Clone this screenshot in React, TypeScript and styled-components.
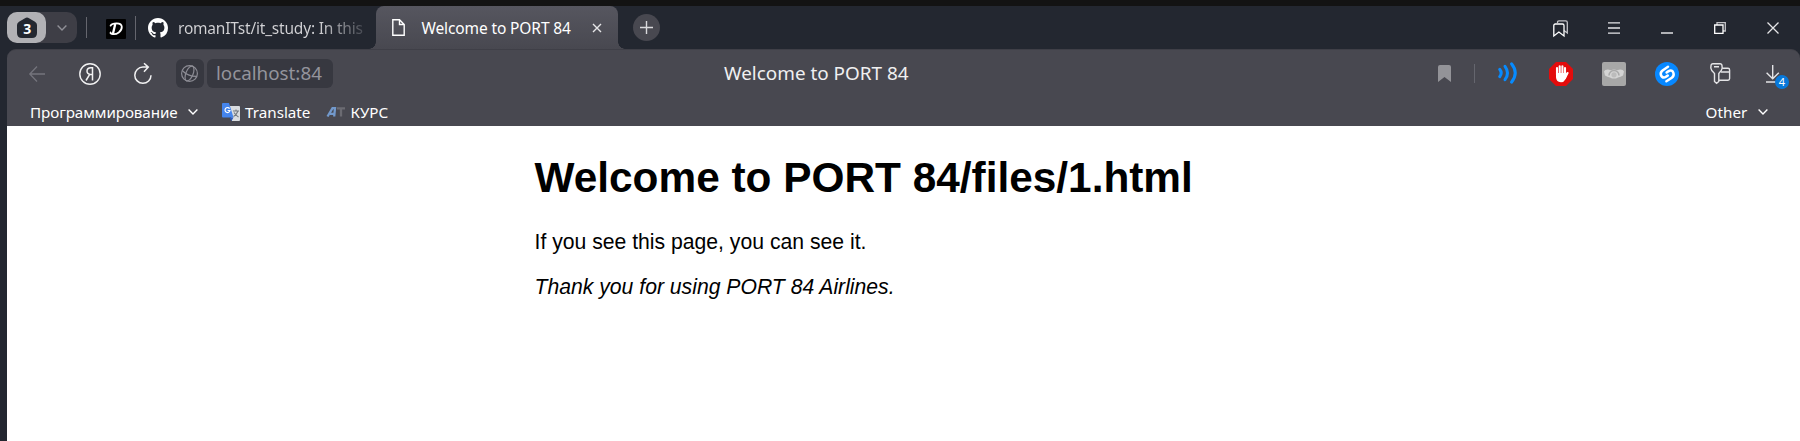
import React from "react";
import styled, { createGlobalStyle } from "styled-components";

const GlobalStyle = createGlobalStyle`
  * { box-sizing: border-box; }
  body { margin: 0; background: #232730; overflow: hidden; }
`;

const uiFont = `"Noto Sans", "Open Sans", sans-serif`;

const Window = styled.div`
  width: 1800px;
  height: 441px;
  display: flex;
  flex-direction: column;
  background: #232730;
  border-top: 6px solid #131313;
  padding-left: 7px;
  overflow: hidden;
  font-family: ${uiFont};
  color: #fff;
`;

const TabStrip = styled.header`
  height: 43px;
  flex: none;
  display: flex;
  align-items: center;
`;

const TabGroup = styled.div`
  display: flex;
  width: 70px;
  height: 31px;
  border-radius: 10px;
  background: #3e3e46;
`;

const GroupBadge = styled.div`
  width: 39px;
  border-radius: 10px;
  background: #b1b1b5;
  display: flex;
  align-items: center;
  justify-content: center;
`;

const GroupToggle = styled.div`
  flex: 1;
  display: flex;
  align-items: center;
  justify-content: center;
  padding-left: 1px;
`;

const Divider = styled.i<{ $h: number; $ml: number }>`
  width: 1px;
  height: ${(p) => p.$h}px;
  margin-left: ${(p) => p.$ml}px;
  background: #65666e;
  flex: none;
`;

const Icon = styled.svg<{ $ml?: number; $mr?: number; $dy?: number }>`
  display: block;
  flex: none;
  overflow: visible;
  margin-left: ${(p) => p.$ml ?? 0}px;
  margin-right: ${(p) => p.$mr ?? 0}px;
  margin-top: ${(p) => (p.$dy ?? 0) * 2}px;
`;

const Label = styled.span<{
  $size: number;
  $ml?: number;
  $ls?: number;
  $color?: string;
}>`
  font-size: ${(p) => p.$size}px;
  line-height: 24px;
  margin-left: ${(p) => p.$ml ?? 0}px;
  letter-spacing: ${(p) => p.$ls ?? 0}px;
  color: ${(p) => p.$color ?? "#fff"};
  white-space: nowrap;
  flex: none;
`;

const AddressLabel = styled(Label)`
  padding-bottom: 2px;
`;

const InactiveTab = styled.div`
  display: flex;
  align-items: center;
  width: 232px;
  height: 43px;
  padding-left: 12px;
`;

const FadedTitle = styled(Label)`
  background: linear-gradient(90deg, #d3d3d6 0 76%, #43464f 101%);
  background-clip: text;
  -webkit-text-fill-color: transparent;
`;

const ActiveTab = styled.div`
  position: relative;
  display: flex;
  align-items: center;
  width: 242px;
  height: 43px;
  margin-left: 8px;
  border-radius: 8px 8px 0 0;
  background: linear-gradient(#56565f, #484850);
  &::before,
  &::after {
    content: "";
    position: absolute;
    bottom: 0;
    width: 7px;
    height: 7px;
  }
  &::before {
    left: -7px;
    background: radial-gradient(circle at 0 0, transparent 6.5px, #484850 7px);
  }
  &::after {
    right: -7px;
    background: radial-gradient(circle at 100% 0, transparent 6.5px, #484850 7px);
  }
`;

const NewTab = styled.div`
  width: 27px;
  height: 27px;
  margin-left: 15px;
  border-radius: 50%;
  background: #484850;
  display: flex;
  align-items: center;
  justify-content: center;
`;

const WindowControls = styled.div`
  margin-left: auto;
  display: flex;
  align-items: center;
  padding-right: 21px;
`;

const Chrome = styled.div`
  flex: none;
  height: 77px;
  background: #484850;
  border-radius: 9px 9px 0 0;
  border-top: 1px solid #3f3f47;
`;

const AddressBar = styled.nav`
  display: flex;
  align-items: center;
  height: 47px;
  margin-bottom: 1px;
`;

const AddressChip = styled.div<{ $w: number; $ml: number }>`
  display: flex;
  align-items: center;
  width: ${(p) => p.$w}px;
  height: 29px;
  margin-left: ${(p) => p.$ml}px;
  border-radius: 6px;
  background: #373840;
`;

const Extensions = styled.div`
  margin-left: auto;
  display: flex;
  align-items: center;
  padding-right: 21px;
`;

const Download = styled.div`
  position: relative;
  margin-left: 36px;
`;

const Count = styled.b`
  position: absolute;
  left: 9px;
  top: 10.5px;
  width: 14px;
  height: 14px;
  border-radius: 50%;
  background: #0778da;
  font: 400 11px/14px ${uiFont};
  text-align: center;
`;

const BookmarksBar = styled.nav`
  display: flex;
  align-items: center;
  height: 28px;
  padding: 0 32px 0 23px;
`;

const Spacer = styled.div`
  flex: 1;
`;

const Page = styled.main`
  flex: 1;
  background: #fff;
  color: #000;
  padding: 28px 0 0 527.5px;
  font-family: "Liberation Sans", Arial, sans-serif;
  font-size: 21.18px;
  line-height: 24px;
`;

const Heading = styled.h1`
  margin: 0;
  font-size: 42.37px;
  line-height: 48px;
`;

const Paragraph = styled.p<{ $mt: number }>`
  margin: ${(p) => p.$mt}px 0 0;
`;

const Chevron = ({ ml = 0, color = "#fff", dy = 0 }: { ml?: number; color?: string; dy?: number }) => (
  <Icon $ml={ml} $dy={dy} width="10" height="6" fill="none" stroke={color} strokeWidth="1.4">
    <path d="M.6.6 5 5 9.4.6" />
  </Icon>
);

export default function App() {
  return (
    <Window>
      <GlobalStyle />
      <TabStrip>
        <TabGroup>
          <GroupBadge>
            <svg width="20" height="22" viewBox="0 0 20 22">
              <path
                d="M8 1.2Q10 0 12 1.2L18 4.8Q20 6 20 8V16Q20 21 15 21H5Q0 21 0 16V8Q0 6 2 4.8Z"
                fill="#232730"
              />
              <text x="10.3" y="17" textAnchor="middle" fill="#fff" fontFamily="Noto Sans" fontWeight="700" fontSize="14">
                3
              </text>
            </svg>
          </GroupBadge>
          <GroupToggle>
            <Chevron color="#909097" dy={0.5} />
          </GroupToggle>
        </TabGroup>
        <Divider $h={21} $ml={9} />
        <Icon $ml={19} $dy={1.5} width="20" height="20">
          <rect width="20" height="20" rx="1" fill="#000" />
          <g fill="none" stroke="#fff" strokeLinecap="round">
            <path d="M9.2 5.3 7 14.5" strokeWidth="2.3" />
            <path d="M4.6 6.6C6 4 15.5 3 15.8 7.8 16 12.5 10.5 15.6 7 15.1 5 14.9 4.2 14.5 4.6 13.5" strokeWidth="1.8" />
          </g>
        </Icon>
        <Divider $h={24} $ml={9} />
        <InactiveTab>
          <Icon $dy={0.5} width="20" height="20" viewBox="0 0 16 16" fill="#fff">
            <path d="M8 0C3.58 0 0 3.58 0 8c0 3.54 2.29 6.53 5.47 7.59.4.07.55-.17.55-.38 0-.19-.01-.82-.01-1.49-2.01.37-2.53-.49-2.69-.94-.09-.23-.48-.94-.82-1.13-.28-.15-.68-.52-.01-.53.63-.01 1.08.58 1.23.82.72 1.21 1.87.87 2.33.66.07-.52.28-.87.51-1.07-1.78-.2-3.64-.89-3.64-3.95 0-.87.31-1.59.82-2.15-.08-.2-.36-1.02.08-2.12 0 0 .67-.21 2.2.82.64-.18 1.32-.27 2-.27s1.36.09 2 .27c1.53-1.04 2.2-.82 2.2-.82.44 1.1.16 1.92.08 2.12.51.56.82 1.27.82 2.15 0 3.07-1.87 3.75-3.65 3.95.29.25.54.73.54 1.48 0 1.07-.01 1.93-.01 2.2 0 .21.15.46.55.38A8.01 8.01 0 0 0 16 8c0-4.42-3.58-8-8-8Z" />
          </Icon>
          <FadedTitle $size={15.5} $ml={10} $ls={-0.2}>romanITst/it_study: In this</FadedTitle>
        </InactiveTab>
        <ActiveTab>
          <Icon $ml={16} width="13" height="17" fill="none" stroke="#fff" strokeWidth="1.4">
            <path d="M.8.8H7.5L12.2 5.5V16.2H.8ZM7.5.8V5.5H12.2" />
          </Icon>
          <Label $size={15.5} $ml={16.5} $ls={-0.12}>Welcome to PORT 84</Label>
          <Spacer />
          <Icon $dy={0.5} $mr={17} width="8" height="8" stroke="#e6e6e8" strokeWidth="1.4">
            <path d="M0 0 8 8M8 0 0 8" />
          </Icon>
        </ActiveTab>
        <NewTab>
          <svg width="13" height="13" stroke="#d9d9dc" strokeWidth="1.4">
            <path d="M6.5 0V13M0 6.5H13" />
          </svg>
        </NewTab>
        <WindowControls>
          <Icon $dy={0.5} width="15" height="17" fill="none" strokeWidth="1.3">
            <path d="M4.5 3V2.5Q4.5.8 6 .8H12.7Q14.3.8 14.3 2.5V13L11 10.5" stroke="#c4c4c8" />
            <path d="M.8 16V5.5Q.8 4 2.3 4H9.5Q11 4 11 5.5V16L5.9 12Z" stroke="#fff" />
          </Icon>
          <Icon $ml={40} width="12" height="12" strokeWidth="1.3" stroke="#e5e5e7">
            <path d="M0 .8H12M0 6H12M0 11.2H12" />
          </Icon>
          <Icon $ml={41} width="12" height="12" stroke="#fff" strokeWidth="1.3">
            <path d="M0 11H12" />
          </Icon>
          <Icon $ml={41} width="12" height="12" fill="none" strokeWidth="1.3">
            <path d="M3 3V.7H11.3V9H9" stroke="#c4c4c8" />
            <path d="M.7 3H9V11.3H.7Z" stroke="#fff" />
          </Icon>
          <Icon $ml={41} width="12" height="12" stroke="#e5e5e7" strokeWidth="1.3">
            <path d="M.5.5 11.5 11.5M11.5.5.5 11.5" />
          </Icon>
        </WindowControls>
      </TabStrip>

      <Chrome>
        <AddressBar>
          <Icon $ml={22} width="16" height="16" fill="none" stroke="#74747c" strokeWidth="1.3">
            <path d="M16 8H.8M8 .5.8 8 8 15.5" />
          </Icon>
          <Icon $ml={34} $dy={0.5} width="22" height="22" fill="none" stroke="#f1f1f2" strokeWidth="1.4">
            <circle cx="11" cy="11" r="10.2" />
            <path d="M13.5 17.5V4.7H11.8C6.8 4.7 6.9 11.4 11.2 11.4H13.5M10.7 11.4 7 17.5" strokeWidth="1.5" />
          </Icon>
          <Icon $ml={33} width="18" height="21" fill="none" stroke="#f1f1f2" strokeWidth="1.5">
            <path d="M17 12.2A8.1 8.1 0 1 1 9 4.1H14.3M10 .3 14.3 4.1 10 8.8" />
          </Icon>
          <AddressChip $w={28} $ml={24}>
            <Icon $ml={5} $dy={-0.5} width="17" height="17" fill="none" stroke="#8c8c94" strokeWidth="1.2">
              <circle cx="8.5" cy="8.5" r="7.9" />
              <g transform="rotate(22 8.5 8.5)">
                <ellipse cx="8.5" cy="8.5" rx="3.6" ry="7.9" />
                <path d="M.6 8.5Q8.5 12 16.4 8.5" />
              </g>
            </Icon>
          </AddressChip>
          <AddressChip $w={126} $ml={3}>
            <AddressLabel $size={18.8} $ml={9} $color="#94949c">localhost:84</AddressLabel>
          </AddressChip>
          <AddressLabel $size={18.9} $ml={391} $color="#f0f0f1">Welcome to PORT 84</AddressLabel>
          <Extensions>
            <Icon width="13" height="17" $dy={-0.5} fill="#939398">
              <path d="M0 17V2Q0 0 2 0H11Q13 0 13 2V17L6.5 12Z" />
            </Icon>
            <Divider $h={19} $ml={23} />
            <Icon $ml={23} width="19" height="22" $dy={-0.5} fill="none" stroke="#078bff" strokeWidth="3" strokeLinecap="round">
              <path d="M1.7 7.3Q4.7 11 1.7 14.7M7 4.3Q12 11 7 17.7M13.5 1.8Q21 11 13.5 20.2" />
            </Icon>
            <Icon $ml={32} width="24" height="24">
              <path d="M7 0H17L24 7V17L17 24H7L0 17V7Z" fill="#e30c0c" />
              <g stroke="#fff" strokeLinecap="round" strokeWidth="2.1">
                <path d="M8 6V13M10.7 4.2V13M13.4 4.2V13M16 6V13" />
                <path d="M18.5 11 16 16" />
              </g>
              <path d="M7 11H17L18.5 12 16.3 17.5Q15 20.2 12 20.2C8.5 20.2 7 18 7 14.5Z" fill="#fff" />
            </Icon>
            <Icon $ml={29} width="24" height="24">
              <rect width="24" height="24" rx="2" fill="#a7a7a7" />
              <path d="M2 9.5Q3 7.4 6 7.6L9 8.2Q12 6.8 15 8.2L18 7.6Q21 7.4 22 9.5L21 13.5Q18.5 15.2 16 15.4 12 17.8 8 15.4 5.5 15.2 3 13.5Z" fill="#d4d4d4" />
              <path d="M7 13.5A5 5 0 0 1 17 13.5" fill="none" stroke="#aaa" strokeWidth="1.6" />
              <circle cx="12" cy="12.8" r="2.6" fill="#bcbcbc" />
            </Icon>
            <Icon $ml={29} width="24" height="24">
              <circle cx="12" cy="12" r="12" fill="#0788ff" />
              <g fill="none" stroke="#fff" strokeWidth="2.5" strokeLinecap="round">
                <path d="M13 4.8 7.6 8.4C4 11.2 6.2 16.2 9.8 15.4 11 15 11.8 14.4 12.8 13.6" />
                <path d="M11.4 19.3 16.8 15.7C20.4 12.9 18.2 7.9 14.6 8.7 13.4 9.1 12.6 9.7 11.6 10.5" />
              </g>
            </Icon>
            <Icon $ml={31} width="20" height="21" $dy={-0.5} fill="none" stroke="#e4e4e6" strokeWidth="1.4">
              <path d="M2.8.8H10.2Q11.5.8 11.9 2L12.2 5Q12 7.5 8.8 10.5V18.5L6.6 20.3 4.5 18.5V10.5Q1 7.5.8 5L1.1 2Q1.5.8 2.8.8ZM4 3.7H9" />
              <path d="M12.2 5.3H18Q19.6 5.3 19.6 7V15.5Q19.6 17.2 18 17.2H8.8M11 9H19.6" />
            </Icon>
            <Download>
              <Icon width="13" height="18" fill="none" stroke="#e4e4e6" strokeWidth="1.4">
                <path d="M6.7 0V13.5M.6 7.8 6.7 13.8 12.8 7.8M0 17H10" />
              </Icon>
              <Count>4</Count>
            </Download>
          </Extensions>
        </AddressBar>
        <BookmarksBar>
          <Label $size={15.2} $ls={-0.08}>Программирование</Label>
          <Chevron ml={10} />
          <Icon $ml={24} width="18" height="18" $dy={-0.5}>
            <path d="M7 3H17Q18 3 18 4V17Q18 18 17 18H10Z" fill="#d9dce0" />
            <path d="M1 0H7L11.5 14.5H1Q0 14.5 0 13.5V1Q0 0 1 0Z" fill="#4585ed" />
            <path d="M7.5 14.5H11.5L9.5 18Z" fill="#2858bc" />
            <path d="M11 8H17M14 6.5V8M16 8Q14.5 12 11.5 13.5M12 9.5Q13.5 12 16.5 14" fill="none" stroke="#737980" strokeWidth="1.1" />
            <path d="M7.6 5.6A2.5 2.5 0 1 0 8 7.5H5.6" fill="none" stroke="#fff" strokeWidth="1.2" />
          </Icon>
          <Label $size={15.2} $ml={5.5}>Translate</Label>
          <Icon $ml={17} width="18" height="10" fill="none" strokeWidth="2.3">
            <path d="M.5 9.5 5.5 1.2H8L7.2 9.5M3 6.8H7.5" stroke="#7299cc" />
            <path d="M10 1.3H18M14 1.3V9.5" stroke="#6b6b72" />
          </Icon>
          <Label $size={15.2} $ml={5}>КУРС</Label>
          <Spacer />
          <Label $size={15.2} $ls={0.1}>Other</Label>
          <Chevron ml={10.5} />
        </BookmarksBar>
      </Chrome>

      <Page>
        <Heading>Welcome to PORT 84/files/1.html</Heading>
        <Paragraph $mt={28}>If you see this page, you can see it.</Paragraph>
        <Paragraph $mt={21}>
          <em>Thank you for using PORT 84 Airlines.</em>
        </Paragraph>
      </Page>
    </Window>
  );
}
